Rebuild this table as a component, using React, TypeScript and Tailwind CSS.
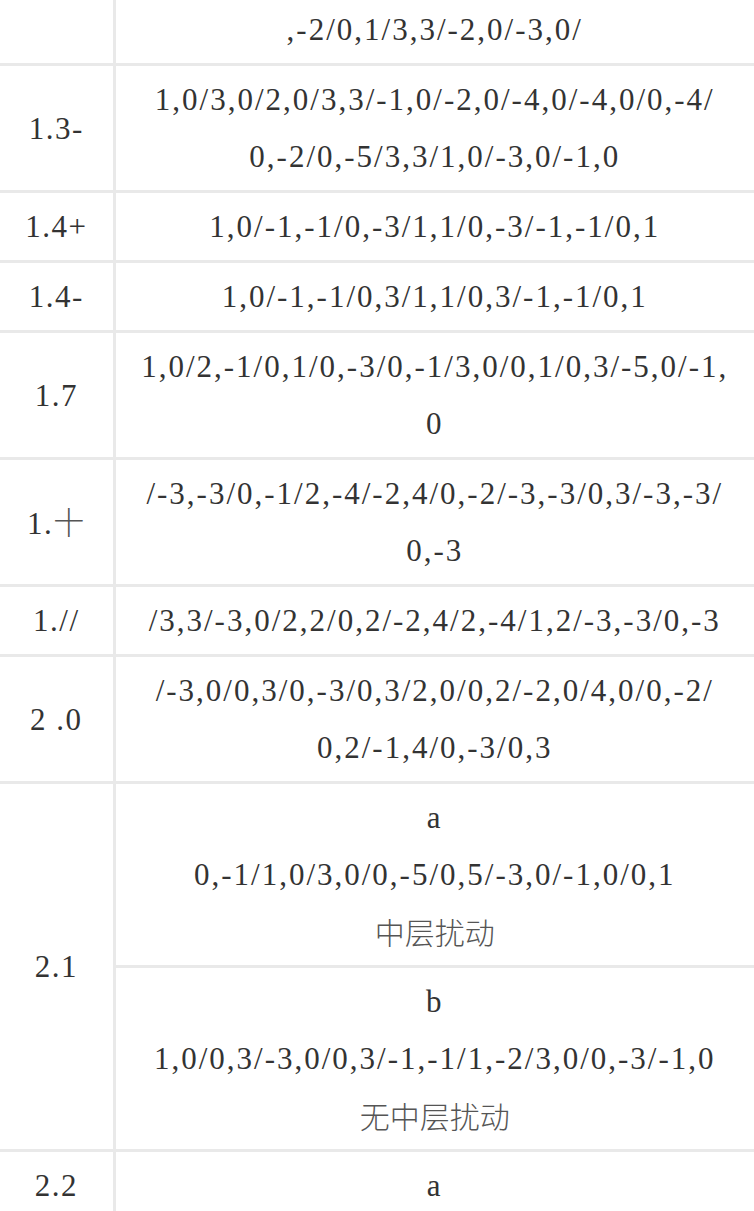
import React from "react";

type Row = {
  label?: string;
  cells: string[][];
};

const rows: Row[] = [
  { label: "", cells: [[",-2/0,1/3,3/-2,0/-3,0/"]] },
  {
    label: "1.3-",
    cells: [["1,0/3,0/2,0/3,3/-1,0/-2,0/-4,0/-4,0/0,-4/", "0,-2/0,-5/3,3/1,0/-3,0/-1,0"]],
  },
  { label: "1.4+", cells: [["1,0/-1,-1/0,-3/1,1/0,-3/-1,-1/0,1"]] },
  { label: "1.4-", cells: [["1,0/-1,-1/0,3/1,1/0,3/-1,-1/0,1"]] },
  {
    label: "1.7",
    cells: [["1,0/2,-1/0,1/0,-3/0,-1/3,0/0,1/0,3/-5,0/-1,", "0"]],
  },
  {
    label: "1.十",
    cells: [["/-3,-3/0,-1/2,-4/-2,4/0,-2/-3,-3/0,3/-3,-3/", "0,-3"]],
  },
  { label: "1.//", cells: [["/3,3/-3,0/2,2/0,2/-2,4/2,-4/1,2/-3,-3/0,-3"]] },
  {
    label: "2 .0",
    cells: [["/-3,0/0,3/0,-3/0,3/2,0/0,2/-2,0/4,0/0,-2/", "0,2/-1,4/0,-3/0,3"]],
  },
  {
    label: "2.1",
    cells: [
      ["a", "0,-1/1,0/3,0/0,-5/0,5/-3,0/-1,0/0,1", "中层扰动"],
      ["b", "1,0/0,3/-3,0/0,3/-1,-1/1,-2/3,0/0,-3/-1,0", "无中层扰动"],
    ],
  },
  { label: "2.2", cells: [["a"]] },
];

const isCjk = (s: string) => /[\u4e00-\u9fff]/.test(s);

function Lines({ lines }: { lines: string[] }) {
  return (
    <>
      {lines.map((line, i) => (
        <div
          key={i}
          className={
            isCjk(line)
              ? "whitespace-nowrap font-['Noto_Sans_CJK_SC',sans-serif] text-[30px] font-light tracking-normal text-[#555]"
              : "whitespace-nowrap"
          }
        >
          {line}
        </div>
      ))}
    </>
  );
}

function Label({ text }: { text: string }) {
  // the chinese character in a label uses the cjk font
  return (
    <>
      {text.split("").map((ch, i) =>
        isCjk(ch) ? (
          <span key={i} className="font-['Noto_Sans_CJK_SC',sans-serif] font-light text-[#555]">
            {ch}
          </span>
        ) : (
          <span key={i}>{ch}</span>
        ),
      )}
    </>
  );
}

export default function App() {
  return (
    <div className="h-[1211px] w-[754px] overflow-hidden bg-white">
      <table className="mt-[-7px] w-[757px] border-collapse font-['Liberation_Serif','Noto_Sans_CJK_SC',serif] text-[31px] leading-[57px] tracking-[2px] text-[#333]">
        <tbody>
          {rows.map((row, ri) =>
            row.cells.map((cell, ci) => (
              <tr key={`${ri}-${ci}`}>
                {ci === 0 && (
                  <td
                    rowSpan={row.cells.length}
                    className="w-[114px] border-[3px] border-l-0 border-[#e9e9e9] px-2 py-[5px] text-center align-middle whitespace-nowrap tracking-[1.5px]"
                  >
                    <Label text={row.label ?? ""} />
                  </td>
                )}
                <td className="border-[3px] border-[#e9e9e9] px-2 py-[5px] text-center align-middle">
                  <Lines lines={cell} />
                </td>
              </tr>
            )),
          )}
        </tbody>
      </table>
    </div>
  );
}
